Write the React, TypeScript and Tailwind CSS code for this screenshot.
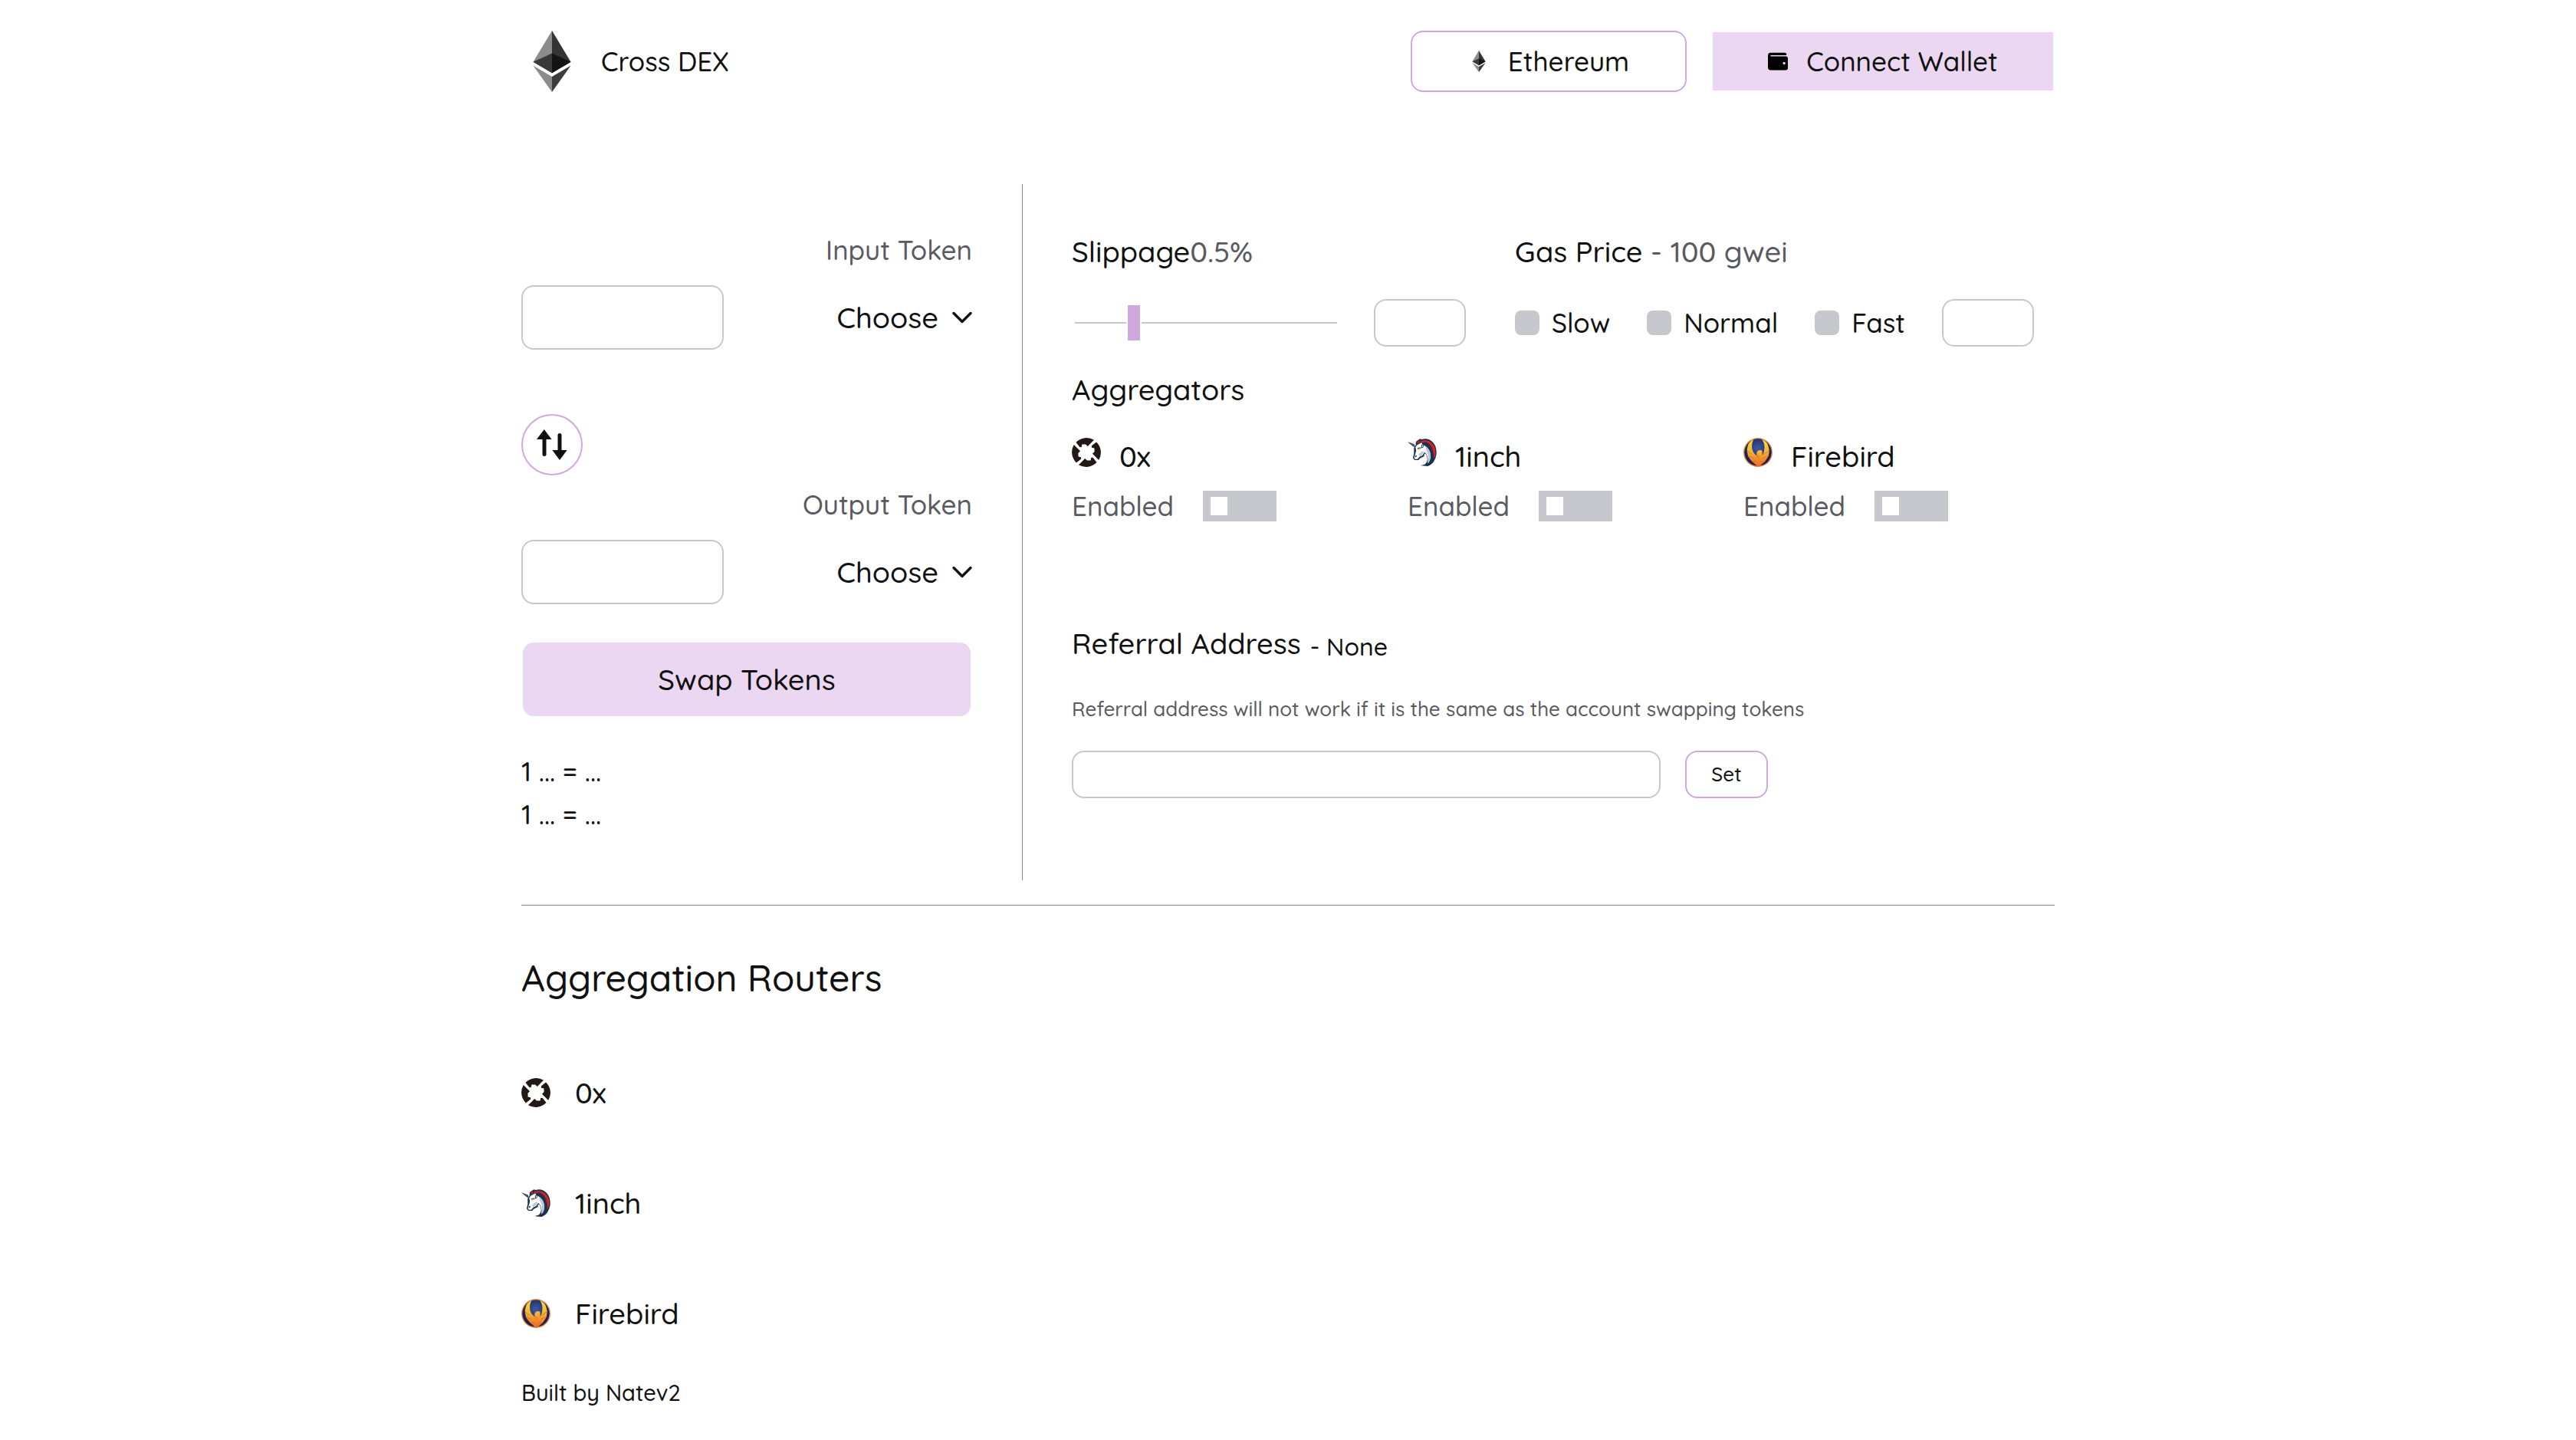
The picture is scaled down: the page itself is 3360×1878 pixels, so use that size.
import { useId } from 'react';
import type { ReactNode } from 'react';
import { FaWallet } from 'react-icons/fa';

function EthereumLogo({ className }: { className: string }) {
  return (
    <svg viewBox="0 0 256 417" className={className} aria-hidden="true">
      <path fill="#343434" d="M127.961 0l-2.795 9.5v275.668l2.795 2.79 127.962-75.638z" />
      <path fill="#8C8C8C" d="M127.962 0L0 212.32l127.962 75.639V154.158z" />
      <path fill="#3C3C3B" d="M127.961 312.187l-1.575 1.92v98.199l1.575 4.6L256 236.587z" />
      <path fill="#8C8C8C" d="M127.962 416.905v-104.72L0 236.585z" />
      <path fill="#141414" d="M127.961 287.958l127.96-75.637-127.96-58.162z" />
      <path fill="#393939" d="M0 212.32l127.96 75.638v-133.8z" />
    </svg>
  );
}

const zeroXPiece = 'M5.5 6A19 19 0 0 1 29 2.8L20.8 11L18 8.4L13.4 8.6L12.8 12L10.5 12.2Z';

function ZeroXLogo() {
  return (
    <svg viewBox="0 0 38 38" className="size-[38px] shrink-0" fill="#231815" aria-hidden="true">
      <path d={zeroXPiece} />
      <path d={zeroXPiece} transform="rotate(90 19 19)" />
      <path d={zeroXPiece} transform="rotate(180 19 19)" />
      <path d={zeroXPiece} transform="rotate(270 19 19)" />
    </svg>
  );
}

function OneInchLogo() {
  return (
    <svg viewBox="17 33 115 115" className="size-[38px] shrink-0" aria-hidden="true">
      <path fill="#1b314f" d="M49 62L50 48L58 42L66 37L74 39C88 34 105 38 116 50C130 64 134 88 129 106C124 126 112 141 96 145L66 142C84 140 94 132 94 118L86 104L78 108L66 114L60 121L44 121L38 112L42 96L42 72Z" />
      <path fill="#1b314f" d="M17 49L43 58L47 70L38 66Z" />
      <path fill="#8293ab" d="M24 53L41 60L43 65Z" />
      <path fill="#d82122" d="M72 45C92 38 114 48 124 70C130 88 128 104 120 114C122 92 114 70 96 58C86 52 78 50 68 51Z" />
      <path fill="#1b314f" d="M84 47C102 52 114 66 119 84C112 72 102 60 84 52Z" />
      <path fill="#b3202a" d="M53 52L60 43L64 50L70 41L70 50L58 56Z" />
      <path fill="#ffffff" d="M54 62L72 52L76 60C92 66 104 78 107 96C109 114 104 128 96 134C100 116 94 98 84 90L76 102L64 108L56 117L46 117L43 110L47 98L51 84L48 70Z" />
      <path fill="#bcc6d6" d="M88 66C102 76 110 92 108 112C106 122 102 130 97 134C101 114 100 96 90 80Z" />
      <path fill="#bcc6d6" d="M74 86L82 88L74 100L63 106L60 98Z" />
      <path fill="#1b314f" d="M72 60L82 58L78 72L70 74Z" />
      <path fill="#ffffff" d="M75 62L79 61L76 70L73 70Z" />
      <path fill="#1b314f" d="M56 73L68 70L67 78L59 80Z" />
      <path fill="#ffe600" d="M58 76L66 73L65 79L59 80Z" />
      <path fill="#1b314f" d="M46 104L53 102L52 108L47 110Z" />
      <path fill="#ffffff" d="M86 94C98 108 98 128 84 138L64 143C78 134 86 120 82 100Z" />
    </svg>
  );
}

function FirebirdLogo() {
  const id = useId();
  return (
    <svg viewBox="30 33 114 114" className="size-[38px] shrink-0" aria-hidden="true">
      <defs>
        <linearGradient id={`${id}f`} x1="0" y1="0" x2="0" y2="1">
          <stop offset="0" stopColor="#fbdc3c" />
          <stop offset="0.5" stopColor="#f7ae33" />
          <stop offset="1" stopColor="#ec6428" />
        </linearGradient>
        <radialGradient id={`${id}b`} cx="0.5" cy="0.35" r="0.5">
          <stop offset="0" stopColor="#3c5aa8" />
          <stop offset="1" stopColor="#1d2150" />
        </radialGradient>
      </defs>
      <circle cx="87" cy="90" r="57" fill="#e98f45" />
      <circle cx="87" cy="90" r="53" fill={`url(#${id}b)`} />
      <path
        fill={`url(#${id}f)`}
        d="M70 40C58 46 50 54 48 62L46 70L44 82L46 92L48 104L56 116L64 126L74 134L84 145L94 145L104 134L114 126L122 114L128 104L130 92L131 80L128 68L124 56C118 48 110 42 103 40C110 50 114 62 112 76C111 88 108 98 103 104C105 100 105 96 103 91L105 87L100 82C92 79 83 84 82 92C81 96 82 100 84 104C74 98 66 88 64 76C62 62 64 50 70 40Z"
      />
      <g stroke="#cf6f22" strokeWidth="2.4" fill="none">
        <path d="M45 84L62 97M50 104L70 113M66 126L82 124" />
        <path d="M129 84L112 97M124 104L106 113M108 128L96 124" />
      </g>
      <path fill="#f4842c" d="M86 100C96 106 98 118 92 128L84 136C90 124 88 116 80 110Z" />
    </svg>
  );
}

function SwapArrows() {
  return (
    <svg viewBox="0 0 40 40" className="size-10" fill="#111111" aria-hidden="true">
      <path d="M9.8 0L19.5 13H0Z" />
      <rect x="7.5" y="9" width="5" height="26" rx="2.5" />
      <path d="M30 40L39.7 27H20.3Z" />
      <rect x="27.5" y="5" width="5" height="26" rx="2.5" />
    </svg>
  );
}

function ChevronDown() {
  return (
    <svg viewBox="0 0 26 16" className="h-4 w-[26px]" fill="none" stroke="#111111" strokeWidth="3.4" strokeLinecap="round" strokeLinejoin="round" aria-hidden="true">
      <path d="M2 2.5L13 13.5L24 2.5" />
    </svg>
  );
}

const fieldBox = 'rounded-2xl border-2 border-[#c7c8cd] bg-white px-4 outline-none';

function TokenField({ label }: { label: string }) {
  const id = useId();
  return (
    <div>
      <label htmlFor={id} className="block text-right text-[#5a5a62]">{label}</label>
      <div className="mt-[18px] flex items-center justify-between">
        <input id={id} type="text" className={`h-[84px] w-[264px] ${fieldBox}`} />
        <button type="button" className="flex items-center gap-[18px] text-[38px] leading-[60px]">
          Choose
          <ChevronDown />
        </button>
      </div>
    </div>
  );
}

function GasOption({ label }: { label: string }) {
  return (
    <label className="flex items-center gap-4">
      <input type="checkbox" className="size-8 appearance-none rounded-lg bg-[#c7c8cd]" />
      {label}
    </label>
  );
}

function Aggregator({ name, logo }: { name: string; logo: ReactNode }) {
  return (
    <div>
      <div className="flex items-start gap-6 text-[38px] leading-[60px]">
        <span className="pt-[6px]">{logo}</span>
        <h3>{name}</h3>
      </div>
      <label className="mt-[7px] flex items-center gap-[38px] text-[#5a5a62]">
        Enabled
        <input
          type="checkbox"
          role="switch"
          className="flex h-10 w-24 appearance-none items-center bg-[#c7c8cd] px-[10px] before:block before:h-6 before:w-[22px] before:bg-white before:content-['']"
        />
      </label>
    </div>
  );
}

const aggregators = [
  { name: '0x', Logo: ZeroXLogo },
  { name: '1inch', Logo: OneInchLogo },
  { name: 'Firebird', Logo: FirebirdLogo },
];

export default function App() {
  return (
    <div className="min-h-screen bg-white font-['Quicksand','Lato',sans-serif] text-[35px] leading-[56px] font-medium text-[#111111]">
      <div className="mx-auto w-full max-w-[2000px]">
        <header className="flex items-center justify-between py-10">
          <div className="flex items-center gap-6">
            <EthereumLogo className="size-20" />
            <h1>Cross DEX</h1>
          </div>
          <div className="flex gap-8">
            <button type="button" className="flex h-20 w-[360px] items-center justify-center gap-6 rounded-2xl border-2 border-[#d1a8de]">
              <EthereumLogo className="size-7" />
              Ethereum
            </button>
            <button type="button" className="flex h-20 w-[448px] items-center justify-center gap-6 border-2 border-white bg-[#ebd7f2]">
              <FaWallet className="size-[26px] text-black" />
              Connect Wallet
            </button>
          </div>
        </header>

        <main>
          <div className="mt-20 flex border-b border-[#85868a] pb-8">
            <section className="w-[654px] shrink-0 border-r border-[#85868a] pt-[58px] pr-[65px] pb-[58px]">
              <TokenField label="Input Token" />
              <button type="button" aria-label="Switch tokens" className="mt-[84px] mb-[10px] flex size-20 items-center justify-center rounded-full border-2 border-[#d1a8de]">
                <SwapArrows />
              </button>
              <TokenField label="Output Token" />
              <button type="button" className="mt-12 h-[100px] w-full rounded-2xl border-2 border-white bg-[#ebd7f2] text-[38px]">
                Swap Tokens
              </button>
              <div className="mt-[42px]">
                <p>1 ... = ...</p>
                <p>1 ... = ...</p>
              </div>
            </section>

            <section className="grow pt-[58px] pl-16">
              <div className="flex gap-16">
                <div>
                  <h2 className="text-[38px] leading-[60px]">
                    Slippage<span className="text-[#5a5a62]">0.5%</span>
                  </h2>
                  <div className="mt-8 flex items-center">
                    <input
                      type="range"
                      aria-label="Slippage"
                      min="0"
                      max="2.4"
                      step="0.1"
                      defaultValue="0.5"
                      className="mr-12 ml-1 h-[46px] w-[342px] appearance-none bg-transparent [&::-webkit-slider-runnable-track]:h-0.5 [&::-webkit-slider-runnable-track]:bg-[#c7c8cd] [&::-webkit-slider-thumb]:-mt-[22px] [&::-webkit-slider-thumb]:h-[46px] [&::-webkit-slider-thumb]:w-5 [&::-webkit-slider-thumb]:appearance-none [&::-webkit-slider-thumb]:border-x-2 [&::-webkit-slider-thumb]:border-white [&::-webkit-slider-thumb]:bg-[#d1a8de]"
                    />
                    <input type="text" aria-label="Custom slippage" className={`h-[62px] w-[120px] ${fieldBox}`} />
                  </div>
                </div>
                <div>
                  <h2 className="text-[38px] leading-[60px]">
                    Gas Price <span className="text-[#5a5a62]">- 100 gwei</span>
                  </h2>
                  <div className="mt-8 flex items-center gap-12">
                    <GasOption label="Slow" />
                    <GasOption label="Normal" />
                    <GasOption label="Fast" />
                    <input type="text" aria-label="Custom gas price" className={`h-[62px] w-[120px] ${fieldBox}`} />
                  </div>
                </div>
              </div>

              <h2 className="mt-[26px] text-[38px] leading-[60px]">Aggregators</h2>
              <div className="mt-[27px] grid grid-cols-3 gap-8">
                {aggregators.map(({ name, Logo }) => (
                  <Aggregator key={name} name={name} logo={<Logo />} />
                ))}
              </div>

              <div className="mt-[121px] flex items-end gap-3">
                <h2 className="text-[38px] leading-[60px]">Referral Address</h2>
                <p className="text-[32px] leading-[52px]">- None</p>
              </div>
              <p className="mt-9 text-[26px] leading-10 text-[#5a5a62]">
                Referral address will not work if it is the same as the account swapping tokens
              </p>
              <div className="mt-[34px] flex gap-8 text-[26px] leading-10">
                <input type="text" aria-label="Referral address" className={`h-[62px] w-[768px] ${fieldBox}`} />
                <button type="button" className="h-[62px] w-[108px] rounded-2xl border-2 border-[#d1a8de]">Set</button>
              </div>
            </section>
          </div>

          <section>
            <h2 className="mt-14 text-[48px] leading-[76px]">Aggregation Routers</h2>
            <ul className="mt-[82px] flex flex-col gap-[84px]">
              {aggregators.map(({ name, Logo }) => (
                <li key={name} className="flex items-center gap-8 text-[38px] leading-[60px]">
                  <Logo />
                  {name}
                </li>
              ))}
            </ul>
          </section>
        </main>

        <footer className="mt-[50px] text-[29px] leading-[46px]">Built by Natev2</footer>
      </div>
    </div>
  );
}
